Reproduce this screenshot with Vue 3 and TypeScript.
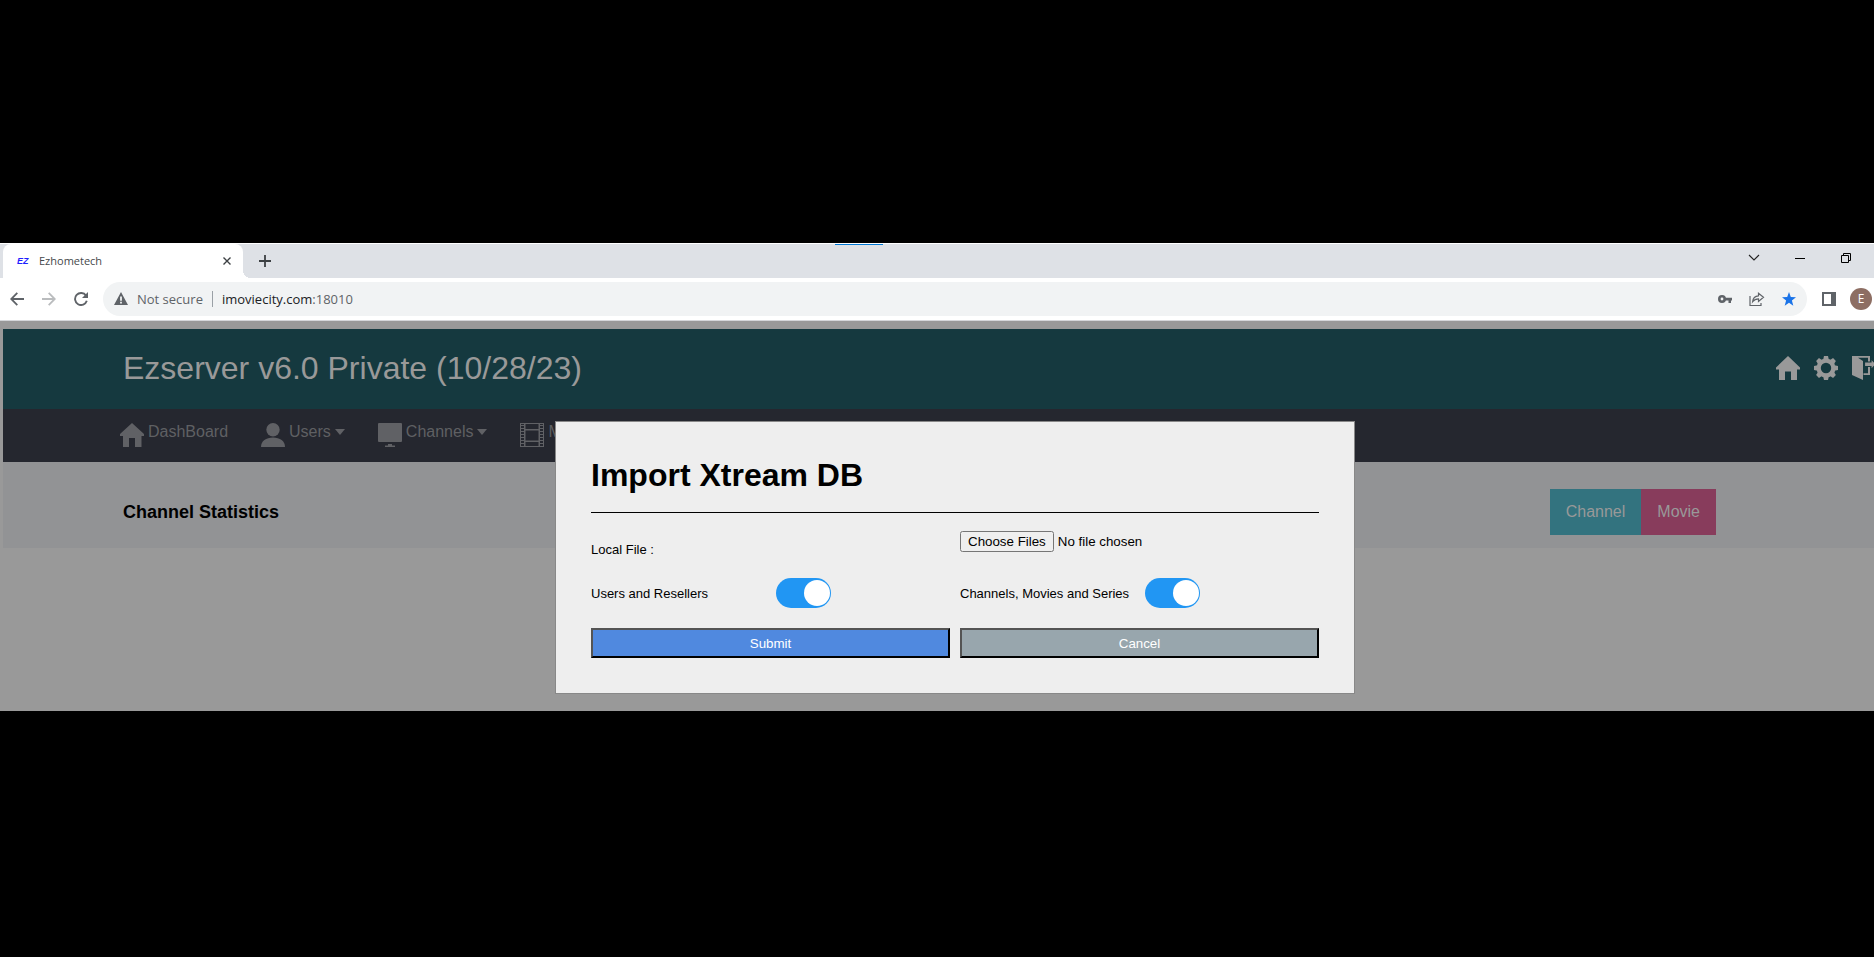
<script setup lang="ts">
import { ref } from 'vue'

interface NavItem {
  label: string
  icon: 'home' | 'user' | 'screen' | 'film'
  menu: boolean
}

const navItems: NavItem[] = [
  { label: 'DashBoard', icon: 'home', menu: false },
  { label: 'Users', icon: 'user', menu: true },
  { label: 'Channels', icon: 'screen', menu: true },
  { label: 'Movies', icon: 'film', menu: true },
]

const filmHoles = [2, 5, 8, 11, 14, 17, 20]
const importUsers = ref(true)
const importMedia = ref(true)
</script>

<template>
  <div class="desktop">
    <div class="browser">
      <div class="tab-strip">
        <div class="tab">
          <span class="favicon">EZ</span>
          <span class="tab-title">Ezhometech</span>
          <button class="bare" type="button" aria-label="Close tab">
            <svg width="8" height="8" viewBox="0 0 8 8"><path d="M.5.5l7 7M7.5.5l-7 7" fill="none" stroke="#3c4043" stroke-width="1.4" /></svg>
          </button>
        </div>
        <button class="bare new-tab" type="button" aria-label="New tab">
          <svg width="12" height="12" viewBox="0 0 12 12"><path d="M6 0v12M0 6h12" stroke="#3c4043" stroke-width="1.8" /></svg>
        </button>
        <span class="load-bar"></span>
        <div class="window-controls">
          <button class="bare" type="button" aria-label="Search tabs">
            <svg width="12" height="12" viewBox="0 0 12 12"><path d="M1 3l5 5 5-5" fill="none" stroke="#222" stroke-width="1.1" /></svg>
          </button>
          <button class="bare" type="button" aria-label="Minimize">
            <svg width="10" height="10" viewBox="0 0 10 10"><path d="M0 5.5h10" stroke="#000" /></svg>
          </button>
          <button class="bare" type="button" aria-label="Restore">
            <svg width="10" height="10" viewBox="0 0 10 10"><path d="M.5 2.500h7v7h-7zM2.500 2.500v-2h7v7h-2" fill="none" stroke="#000" /></svg>
          </button>
        </div>
      </div>

      <div class="toolbar">
        <div class="history">
          <button class="bare" type="button" aria-label="Back">
            <svg width="14" height="14" viewBox="0 0 14 14"><path d="M14 7H1.500M7.300.8L1.200 7l6.100 6.200" fill="none" stroke="#5f6368" stroke-width="1.800" /></svg>
          </button>
          <button class="bare" type="button" aria-label="Forward">
            <svg width="14" height="14" viewBox="0 0 14 14"><path d="M0 7h12.500M6.700.8L12.800 7l-6.100 6.200" fill="none" stroke="#babcbe" stroke-width="1.800" /></svg>
          </button>
          <button class="bare" type="button" aria-label="Reload">
            <svg width="14" height="14" viewBox="0 0 14 14"><path d="M12 3.600A6 6 0 1 0 12.800 8.800" fill="none" stroke="#5f6368" stroke-width="1.900" /><path d="M14 0v6H8z" fill="#5f6368" /></svg>
          </button>
        </div>
        <div class="omnibox">
          <svg width="14" height="14" viewBox="0 0 14 14"><path d="M7 0l7 13H0zM6.100 4.500v4.300h1.800V4.500zM6.100 9.800v1.600h1.800V9.800z" fill="#5f6368" fill-rule="evenodd" /></svg>
          <span class="not-secure">Not secure</span>
          <span class="divider"></span>
          <span class="url">imoviecity.com<span class="port">:18010</span></span>
          <div class="omni-actions">
            <button class="bare" type="button" aria-label="Passwords">
              <svg width="14" height="10" viewBox="0 0 14 10"><path d="M4 1a4 4 0 1 1 0 8 4 4 0 0 1 0-8zM4 3.600a1.400 1.400 0 1 0 0 2.800 1.400 1.400 0 0 0 0-2.800z" fill="#5f6368" fill-rule="evenodd" /><path d="M7 3.700h7v2.700h-1V9h-2.500V6.400H7z" fill="#5f6368" /></svg>
            </button>
            <button class="bare" type="button" aria-label="Share">
              <svg width="16" height="16" viewBox="0 0 16 16"><path d="M1 5v9.500h11V12M9.500 2.200v2.600C6 5 4 7 3.600 10.700c1.500-2 3.200-2.900 5.900-2.900v2.700L14.500 6.300z" fill="none" stroke="#5f6368" stroke-width="1.200" /></svg>
            </button>
            <button class="bare" type="button" aria-label="Bookmark">
              <svg width="14" height="14" viewBox="0 0 14 14"><path d="M7 0l1.800 4.900 5.200.300-4.100 3.200 1.400 5.300L7 10.700l-4.300 3 1.400-5.300L0 5.200l5.200-.300z" fill="#1a73e8" /></svg>
            </button>
          </div>
        </div>
        <button class="bare" type="button" aria-label="Side panel">
          <svg width="14" height="14" viewBox="0 0 14 14"><path d="M0 0h14v14H0zM2 2v10h7V2z" fill="#5f6368" fill-rule="evenodd" /></svg>
        </button>
        <button class="bare avatar" type="button" aria-label="Profile">E</button>
      </div>

      <div class="viewport">
        <div class="page">
          <header class="banner">
            <div class="brand">Ezserver v6.0 Private (10/28/23)</div>
            <div class="banner-actions">
              <a href="#" aria-label="Home">
                <svg width="24" height="24" viewBox="0 0 24 24"><path d="M12 0l12 11.500v2H21V24h-6v-8.500H9V24H3V13.500H0v-2z" fill="#999" /></svg>
              </a>
              <a href="#" aria-label="Settings">
                <svg width="24" height="24" viewBox="-12 -12 24 24">
                  <path d="M0-9.500A9.500 9.500 0 1 0 0 9.500 9.500 9.500 0 1 0 0-9.500zM0-5.200A5.200 5.200 0 1 1 0 5.200 5.200 5.200 0 1 1 0-5.200z" fill="#999" fill-rule="evenodd" />
                  <path v-for="n in 8" :key="n" d="M-2.800-8.500L-2-12h4l.8 3.500z" fill="#999" :transform="`rotate(${n * 45})`" />
                </svg>
              </a>
              <a href="#" aria-label="Log out">
                <svg width="24" height="24" viewBox="0 0 24 24">
                  <path d="M0 0h18v19h-6.500v-1.800H16V1.800H6l5 3.200v19L0 19z" fill="#999" />
                  <path d="M12.500 6h6.500V2.500l5 5.700-5 5.800v-3.500h-6.500z" fill="#999" stroke="#15393f" stroke-width="1.200" />
                </svg>
              </a>
            </div>
          </header>

          <nav class="main-nav">
            <a v-for="item in navItems" :key="item.label" href="#">
              <svg v-if="item.icon === 'home'" class="nav-icon" viewBox="0 0 24 24"><path d="M12 0l12 11v2h-2.500v11H15v-9H9v9H3V13H0v-2z" /></svg>
              <svg v-else-if="item.icon === 'user'" class="nav-icon" viewBox="0 0 24 24"><circle cx="12" cy="6.700" r="6.700" /><path d="M0 24c0-6 5-9.500 12-9.500S24 18 24 24z" /></svg>
              <svg v-else-if="item.icon === 'screen'" class="nav-icon" viewBox="0 0 24 24"><path d="M1 0h22a1 1 0 0 1 1 1v17a1 1 0 0 1-1 1H1a1 1 0 0 1-1-1V1a1 1 0 0 1 1-1zM10 21h4v1.500h3V24H7v-1.500h3z" /></svg>
              <svg v-else class="nav-icon" viewBox="0 0 24 24">
                <path d="M0 0h24v24H0zM5.500 1v5h13V1zM5.500 7.500v10h13v-10zM5.500 19v4h13v-4zM1 1v22h3V1zM20 1v22h3V1z" fill-rule="evenodd" />
                <path v-for="y in filmHoles" :key="y" :d="`M1 ${y}h3v1H1zM20 ${y}h3v1h-3z`" />
              </svg>
              <span>{{ item.label }}</span>
              <svg v-if="item.menu" class="caret" viewBox="0 0 10 6"><path d="M0 0h10L5 6z" /></svg>
            </a>
          </nav>

          <section class="stats">
            <h2>Channel Statistics</h2>
            <div class="stat-buttons">
              <button class="channel" type="button">Channel</button>
              <button class="movie" type="button">Movie</button>
            </div>
          </section>
        </div>

        <div class="overlay">
          <form class="modal" role="dialog" aria-labelledby="import-title" @submit.prevent>
            <h1 id="import-title">Import Xtream DB</h1>
            <div class="row file-row">
              <label class="file-label" for="local-file">Local File :</label>
              <input id="local-file" type="file" multiple />
            </div>
            <div class="row switch-row">
              <div class="switch-field">
                <label for="users-switch">Users and Resellers</label>
                <input id="users-switch" v-model="importUsers" class="switch" type="checkbox" />
              </div>
              <div class="switch-field">
                <label for="media-switch">Channels, Movies and Series</label>
                <input id="media-switch" v-model="importMedia" class="switch" type="checkbox" />
              </div>
            </div>
            <div class="row">
              <button class="action submit" type="submit">Submit</button>
              <button class="action cancel" type="button">Cancel</button>
            </div>
          </form>
        </div>
      </div>
    </div>
  </div>
</template>

<style>
body {
  margin: 0;
  background: #000;
}
</style>

<style scoped>
* {
  box-sizing: border-box;
}
.desktop {
  min-height: 100vh;
  padding-top: 243px;
  overflow: hidden;
  background: #000;
  font-family: "Liberation Sans", Arial, sans-serif;
}
.browser {
  overflow: hidden;
}
svg {
  display: block;
  flex: none;
}
.bare {
  display: flex;
  align-items: center;
  justify-content: center;
  padding: 0;
  border: 0;
  background: none;
}

/* Tab strip */
.tab-strip {
  position: relative;
  display: flex;
  height: 35px;
  padding: 0 5px 0 3px;
  border-top: 1px solid #fff;
  background: #dee1e6;
  font-family: "Open Sans", "Noto Sans", sans-serif;
}
.tab {
  position: relative;
  display: flex;
  align-items: center;
  width: 240px;
  padding: 0 12px 0 14px;
  border-radius: 8px 8px 0 0;
  background: #fff;
}
.tab::after {
  content: "";
  position: absolute;
  left: 100%;
  bottom: 0;
  width: 8px;
  height: 8px;
  background: radial-gradient(circle at 8px 0, transparent 8px, #fff 8px);
}
.favicon {
  width: 22px;
  color: #1f1fff;
  font: italic bold 9px/16px "Liberation Sans", Arial, sans-serif;
}
.tab-title {
  flex: 1;
  padding-bottom: 2px;
  color: #45484b;
  font-size: 11px;
}
.new-tab {
  width: 44px;
}
.load-bar {
  position: absolute;
  top: 0;
  left: 835px;
  width: 48px;
  height: 1px;
  background: #0078d4;
}
.window-controls {
  display: flex;
  height: 28px;
  margin-left: auto;
}
.window-controls button {
  width: 46px;
}

/* Toolbar */
.toolbar {
  display: flex;
  align-items: center;
  height: 43px;
  padding: 4px 2px 4px 10px;
  border-bottom: 1px solid #d5d7da;
  background: #fff;
  font-family: "Open Sans", "Noto Sans", sans-serif;
}
.history {
  display: flex;
  gap: 18px;
  margin-right: 15px;
}
.omnibox {
  display: flex;
  flex: 1;
  align-items: center;
  height: 34px;
  margin-right: 15px;
  padding: 0 11px;
  border-radius: 17px;
  background: #f1f3f4;
  font-size: 13px;
}
.not-secure {
  margin-left: 9px;
  color: #5f6368;
}
.divider {
  width: 1px;
  height: 16px;
  margin: 0 9px;
  background: #9aa0a6;
}
.url {
  color: #202124;
}
.port {
  color: #5f6368;
}
.omni-actions {
  display: flex;
  align-items: center;
  gap: 17px;
  margin-left: auto;
}
.avatar {
  width: 22px;
  height: 22px;
  margin-left: 14px;
  border-radius: 50%;
  background: #8d6e63;
  color: #fff;
  font: 12px/22px "Open Sans", "Noto Sans", sans-serif;
}

/* Page, wider than the visible part of the window */
.viewport {
  position: relative;
  width: calc(100% + 36px);
  min-height: 390px;
  background: #999;
}
.page {
  padding: 8px 0 0 3px;
}
.banner {
  display: flex;
  align-items: center;
  justify-content: space-between;
  height: 80px;
  padding: 0 34px 2px 120px;
  background: #15393f;
}
.brand {
  color: #999;
  font-size: 32px;
}
.banner-actions {
  display: flex;
  gap: 14px;
}
.main-nav {
  display: flex;
  gap: 33px;
  height: 53px;
  padding: 14px 117px;
  background: #25272f;
}
.main-nav a {
  display: flex;
  height: 24px;
  color: #5f6063;
  font-size: 16px;
  line-height: 18px;
  text-decoration: none;
}
.main-nav svg {
  fill: #606165;
}
.nav-icon {
  width: 24px;
  height: 24px;
  margin-right: 4px;
}
.caret {
  width: 10px;
  height: 6px;
  margin: 6px 0 0 4px;
}
.stats {
  display: flex;
  align-items: center;
  justify-content: space-between;
  height: 86px;
  padding: 14px 194px 0 120px;
  background: #929395;
}
.stats h2 {
  margin: 0;
  color: #000;
  font-size: 18px;
}
.stat-buttons {
  display: flex;
}
.stat-buttons button {
  height: 46px;
  padding: 0 16px;
  border: 0;
  color: #999;
  font: 16px/18px "Liberation Sans", Arial, sans-serif;
}
.stat-buttons .channel {
  background: #33737f;
}
.stat-buttons .movie {
  background: #883c5c;
}

/* Dialog */
.overlay {
  position: absolute;
  inset: 0;
  padding-top: 100px;
}
.modal {
  width: 800px;
  margin: 0 auto;
  padding: 35px;
  border: 1px solid #888;
  background: #eee;
  color: #000;
  font-size: 13px;
}
.modal h1 {
  margin: 0;
  padding-bottom: 19px;
  border-bottom: 1px solid #000;
  font-size: 32px;
  line-height: 36px;
}
.row {
  display: grid;
  grid-template-columns: 1fr 1fr;
  gap: 10px;
}
.file-row {
  height: 65px;
  padding-top: 18px;
}
.file-label {
  padding-top: 11px;
}
.file-row input {
  height: 21px;
  font-family: "Liberation Sans", Arial, sans-serif;
}
.switch-row {
  margin-bottom: 20px;
}
.switch-field {
  display: grid;
  grid-template-columns: 185px 55px;
  align-items: center;
}
.switch {
  display: flex;
  align-items: center;
  width: 55px;
  height: 30px;
  margin: 0;
  padding: 2px 1px;
  border-radius: 15px;
  background: #ccc;
  appearance: none;
}
.switch::before {
  content: "";
  width: 26px;
  height: 26px;
  border-radius: 50%;
  background: #fff;
}
.switch:checked {
  justify-content: flex-end;
  background: #2196f3;
}
.action {
  height: 30px;
  border: 2px outset #000;
  color: #fff;
  font-family: "Liberation Sans", Arial, sans-serif;
}
.submit {
  background: #5089df;
}
.cancel {
  background: #98a6ad;
}
</style>
